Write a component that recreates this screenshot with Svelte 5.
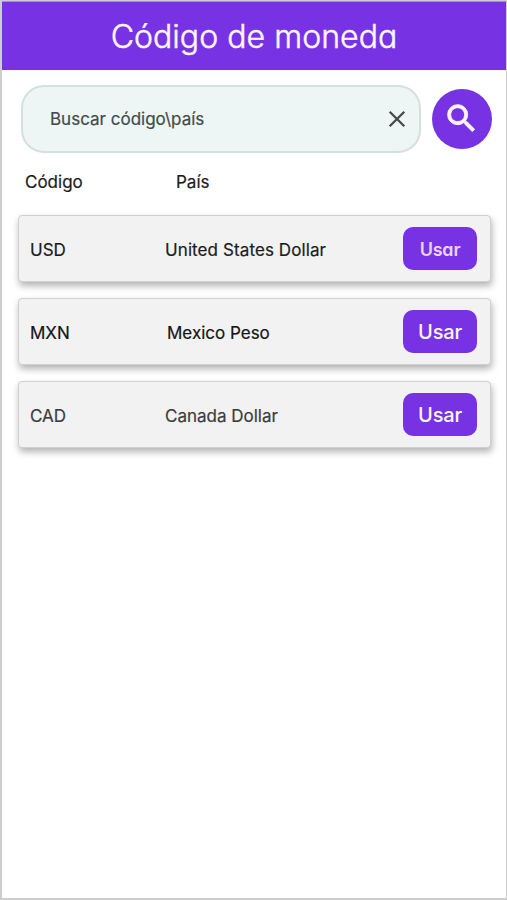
<script>
  const rows = [
    { code: 'USD', name: 'United States Dollar', variant: 'first' },
    { code: 'MXN', name: 'Mexico Peso', variant: 'second' },
    { code: 'CAD', name: 'Canada Dollar', variant: 'third' }
  ];
</script>

<div class="screen">
  <header><h1>Código de moneda</h1></header>
  <main>
    <div class="search">
      <div class="field">
        <span class="hint">Buscar código\país</span>
        <svg class="clear" width="18" height="18" viewBox="0 0 18 18" aria-label="Borrar">
          <path d="M1.7 1.7 16.3 16.3M16.3 1.7 1.7 16.3" fill="none" stroke="#444b4a" stroke-width="2.3" />
        </svg>
      </div>
      <button class="go" aria-label="Buscar">
        <svg width="37" height="37" viewBox="0 0 24 24">
          <path fill="#fbf5ff" stroke="#fbf5ff" stroke-width="0.6" d="M15.5 14h-.79l-.28-.27A6.47 6.47 0 0 0 16 9.5 6.5 6.5 0 1 0 9.5 16c1.61 0 3.09-.59 4.23-1.57l.27.28v.79l5 4.99L20.49 19l-4.99-5zm-6 0C7.01 14 5 11.99 5 9.5S7.01 5 9.5 5 14 7.01 14 9.5 11.99 14 9.5 14z" />
        </svg>
      </button>
    </div>
    <div class="labels"><span class="l-code">Código</span><span class="l-name">País</span></div>
    <div class="list">
      {#each rows as row}
        <div class="card {row.variant}">
          <span class="code">{row.code}</span>
          <span class="name">{row.name}</span>
          <button class="use"><span>Usar</span></button>
        </div>
      {/each}
    </div>
  </main>
</div>

<style>
  :global(body) { margin: 0; background: #fff; }
  .screen {
    box-sizing: border-box;
    width: 507px;
    height: 900px;
    border: solid #cdcdcd;
    border-width: 1px 1px 2px 2px;
    background: #fff;
    font-family: Inter, "Liberation Sans", sans-serif;
    color: #1c1c1c;
    overflow: hidden;
  }
  header {
    height: 68px;
    border-top: 1px solid #a987e6;
    margin-left: -1px;
    margin-right: -1px;
    background: #7733e3;
    display: flex;
    align-items: center;
    justify-content: center;
  }
  h1 {
    margin: 1px 0 0 0;
    font-size: 32px;
    line-height: 42px;
    font-weight: 300;
    letter-spacing: 0.05px;
    font-feature-settings: "cv11" 1;
    -webkit-text-stroke: 0.5px #fbf5ff;
    color: #fbf5ff;
    white-space: nowrap;
  }
  main { padding: 15px 13px 0 16px; }
  .search { display: flex; align-items: center; padding-left: 3px; }
  .field {
    box-sizing: border-box;
    width: 400px;
    flex: none;
    height: 68px;
    border: 2px solid #d7dfdc;
    border-radius: 23px;
    background: #edf6f4;
    display: flex;
    align-items: center;
    justify-content: space-between;
    padding: 0 13px 0 27px;
  }
  .hint { font-size: 17px; color: #434b4a; line-height: 24px; -webkit-text-stroke: 0.2px; }
  .clear { display: block; }
  button { border: 0; padding: 0; margin: 0; font-family: inherit; display: flex; align-items: center; justify-content: center; }
  .go { width: 60px; height: 60px; flex: none; margin-left: 11px; border-radius: 50%; background: #7733e3; }
  .go svg { margin: -2px 0 0 -1px; }
  .labels { height: 24px; margin-top: 17px; display: flex; font-size: 17px; line-height: 24px; -webkit-text-stroke: 0.2px; }
  .l-code { width: 151px; padding-left: 7px; box-sizing: border-box; margin-right: 7px; }
  .list { display: flex; flex-direction: column; gap: 16px; margin-top: 21px; }
  .card {
    box-sizing: border-box;
    width: 473px;
    height: 67px;
    border: 1px solid #d0d0d0;
    border-radius: 4px;
    background: #f2f2f2;
    box-shadow: 1px 4px 7px rgba(0, 0, 0, 0.3);
    display: flex;
    align-items: center;
    padding: 0 13px 0 11px;
    font-size: 17px;
    line-height: 24px;
    -webkit-text-stroke: 0.2px;
  }
  .code { width: 135px; margin-top: 2px; }
  .name { flex: 1; margin-top: 2px; }
  .first .name { letter-spacing: 0.1px; }
  .second .name { padding-left: 2px; }
  .second { color: #151515; }
  .third { color: #3c3c3c; }
  .use {
    width: 74px;
    height: 43px;
    border-radius: 10px;
    background: #7733e3;
    color: #fbf5ff;
    font-size: 20px;
    line-height: 24px;
    font-weight: 500;
    letter-spacing: -0.2px;
    -webkit-text-stroke: 0;
  }
  .first .use { font-size: 18px; font-weight: 600; font-feature-settings: "cv11" 1; color: #e9d5fb; }
  .first .use span { margin-top: 3px; }
</style>
